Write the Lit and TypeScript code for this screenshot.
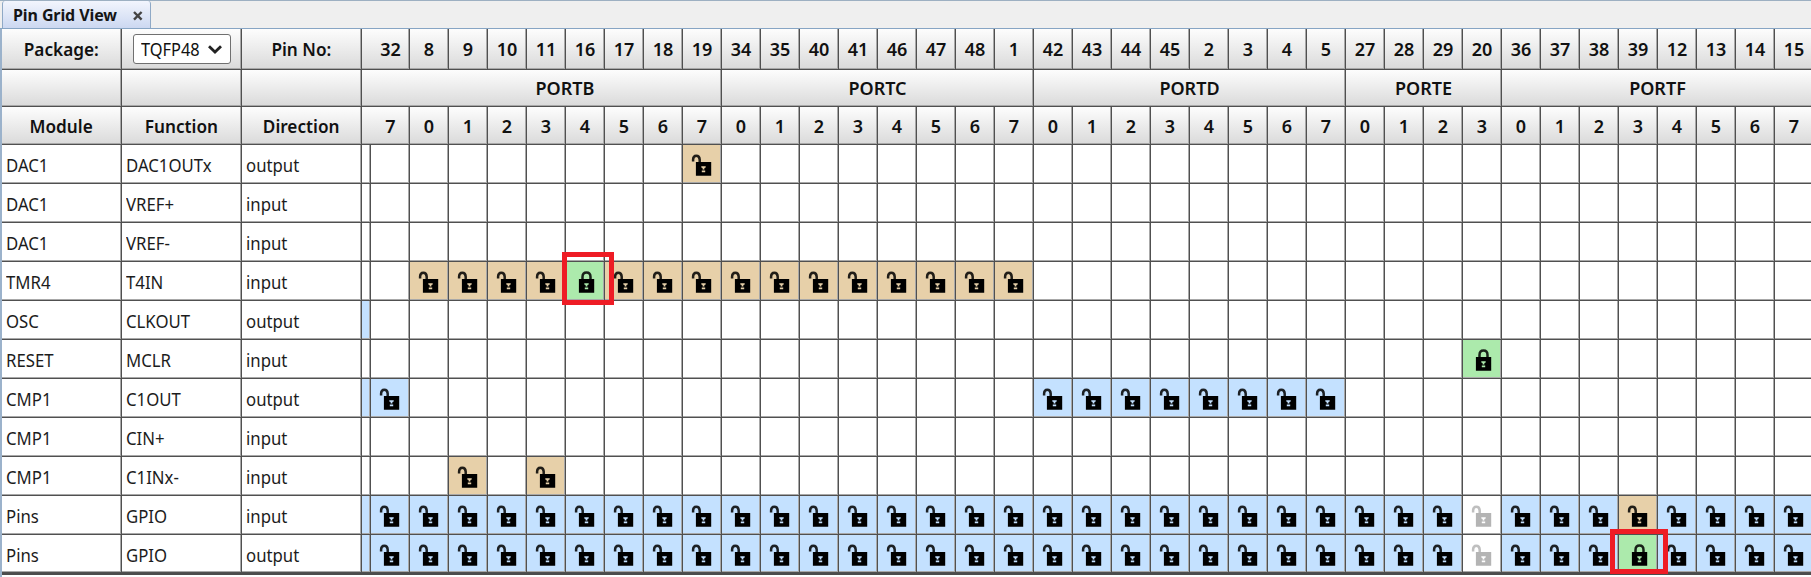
import { LitElement, html, css, svg } from "lit";
import { customElement } from "lit/decorators.js";

const PORTS = [
  { name: "PORTB", pins: [32, 8, 9, 10, 11, 16, 17, 18, 19], bits: [7, 0, 1, 2, 3, 4, 5, 6, 7] },
  { name: "PORTC", pins: [34, 35, 40, 41, 46, 47, 48, 1], bits: [0, 1, 2, 3, 4, 5, 6, 7] },
  { name: "PORTD", pins: [42, 43, 44, 45, 2, 3, 4, 5], bits: [0, 1, 2, 3, 4, 5, 6, 7] },
  { name: "PORTE", pins: [27, 28, 29, 20], bits: [0, 1, 2, 3] },
  { name: "PORTF", pins: [36, 37, 38, 39, 12, 13, 14, 15], bits: [0, 1, 2, 3, 4, 5, 6, 7] },
];
const PINS = PORTS.flatMap((p) => p.pins);
const BITS = PORTS.flatMap((p) => p.bits);

// Cell codes: "." empty, "b" available, "o" shared, "g" locked, "x" disabled
type Row = { module: string; fn: string; dir: string; edge?: boolean; cells: string; mark?: number };
const none = ".".repeat(37);
const put = (base: string, edits: Record<number, string>) =>
  [...base].map((c, i) => edits[i] ?? c).join("");
const all = "b".repeat(37);

const ROWS: Row[] = [
  { module: "DAC1", fn: "DAC1OUTx", dir: "output", cells: put(none, { 8: "o" }) },
  { module: "DAC1", fn: "VREF+", dir: "input", cells: none },
  { module: "DAC1", fn: "VREF-", dir: "input", cells: none },
  { module: "TMR4", fn: "T4IN", dir: "input", cells: ".oooogooooooooooo" + ".".repeat(20), mark: 5 },
  { module: "OSC", fn: "CLKOUT", dir: "output", edge: true, cells: none },
  { module: "RESET", fn: "MCLR", dir: "input", cells: put(none, { 28: "g" }) },
  { module: "CMP1", fn: "C1OUT", dir: "output", edge: true, cells: "b" + ".".repeat(16) + "bbbbbbbb" + ".".repeat(12) },
  { module: "CMP1", fn: "CIN+", dir: "input", cells: none },
  { module: "CMP1", fn: "C1INx-", dir: "input", cells: put(none, { 2: "o", 4: "o" }) },
  { module: "Pins", fn: "GPIO", dir: "input", edge: true, cells: put(all, { 28: "x", 32: "o" }) },
  { module: "Pins", fn: "GPIO", dir: "output", edge: true, cells: put(all, { 28: "x", 32: "g" }), mark: 32 },
];

const lock = (open: boolean) => svg`<svg class="lock" width="21" height="22" viewBox="0 0 21 22">
  <path d=${open ? "M2.1 7.6V5.6Q2.1 1.8 5.3 1.8T8.7 5.6V8.2" : "M8.5 8.5V6Q8.5 1.6 12.5 1.6T16.5 6V8.5"}
    fill="none" stroke="currentColor" stroke-width="2.5" opacity=".86"/>
  <path fill="currentColor" fill-rule="evenodd"
    d="M4.9 8H20.2V21.7H4.9ZM10.3 12.3V13.5L11.6 14.1V15.6H13.4V14.1L14.7 13.5V12.3ZM10.8 16.6V18.2H14.2V16.6Z"/>
</svg>`;

@customElement("app-root")
export class AppRoot extends LitElement {
  static styles = css`
    :host {
      display: block;
      width: 1811px;
      height: 577px;
      overflow: hidden;
      background: #fff;
      color: #1c1c1c;
      font: 18.5px/24px "Noto Sans", sans-serif;
    }
    .tabs {
      box-sizing: border-box;
      height: 29px;
      display: flex;
      background: #efefef;
      border-top: 1px solid #9db0c2;
      border-bottom: 1px solid #87a5c4;
      padding-left: 2px;
    }
    .tab {
      box-sizing: border-box;
      width: 149px;
      display: flex;
      align-items: center;
      border: solid #8fa9c6;
      border-width: 0 1px;
      border-radius: 3px 3px 0 0;
      background: linear-gradient(#f2f5fd, #ccd8f1);
      padding-left: 10px;
      font-size: 16px;
      font-weight: 700;
      letter-spacing: -0.1px;
      color: #151515;
    }
    .tab span { width: 108px; white-space: nowrap; }
    .tab svg { margin: 2px 0 0 12px; }
    .body {
      height: 548px;
      border-left: 2px solid #9bb2cb;
    }
    .grid {
      display: grid;
      grid-template-columns: 120px 120px 120px 9px repeat(37, 39px);
      grid-template-rows: 41px 37px 38px repeat(10, 39px) 38px;
      width: max-content;
      border-bottom: 2px solid #4c4c4c;
    }
    .cell, .head {
      box-sizing: border-box;
      border-right: 1px solid #505050;
      border-bottom: 1px solid #505050;
      box-shadow: inset -1px -1px #a8a8a8;
      display: flex;
      align-items: center;
      justify-content: center;
      min-width: 0;
      position: relative;
      white-space: nowrap;
    }
    .head {
      background: linear-gradient(#fdfdfd, #dadada);
      font-weight: 600;
      font-size: 18px;
      color: #111;
    }
    .label > span { transform: scaleX(.955); }
    .text { justify-content: flex-start; padding: 2px 0 0 4px; }
    .text span { transform: scaleX(.905); transform-origin: 0 50%; }
    .wide { grid-column: span 2; }
    .first { padding-left: 10px; }
    .offset { padding-left: 47px; }
    .b { background: #c4e1ff; }
    .o { background: #e7d0a9; }
    .g { background: #aceaac; }
    .lock { display: block; color: #000; margin: 2px 2px 0 0; }
    .x .lock { color: #b4b4b4; }
    .select {
      box-sizing: border-box;
      width: 98px;
      height: 30px;
      border: 1px solid #707070;
      border-radius: 3px;
      background: #fff;
      display: flex;
      align-items: center;
      padding-left: 7px;
      font-weight: 400;
      font-size: 18px;
    }
    .select span { width: 67px; transform: scaleX(.91); transform-origin: 0 50%; }
    .mark {
      position: absolute;
      z-index: 2;
      border: 5px solid #ee1c25;
      left: -4px;
      top: -10px;
      width: 42px;
      height: 43px;
    }
    .mark.last { left: -9px; top: -6px; width: 48px; height: 35px; }
  `;

  render() {
    return html`
      <div class="tabs">
        <div class="tab"><span>Pin Grid View</span>
          <svg width="10" height="10" viewBox="0 0 10 10"><path d="M1 1L8.6 8.6M8.6 1L1 8.6" stroke="#444" stroke-width="2.4"/></svg>
        </div>
      </div>
      <div class="body"><div class="grid">
        <div class="head label"><span>Package:</span></div>
        <div class="head"><div class="select"><span>TQFP48</span>
          <svg width="14" height="9" viewBox="0 0 14 9"><path d="M1 1.2L7 7L13 1.2" fill="none" stroke="#222" stroke-width="2.8"/></svg>
        </div></div>
        <div class="head label"><span>Pin No:</span></div>
        ${PINS.map((p, i) => html`<div class="head ${i ? "" : "wide first"}"><span>${p}</span></div>`)}
        <div class="head"></div><div class="head"></div><div class="head"></div>
        ${PORTS.map((p, i) => html`<div class="head ${i ? "" : "offset"}" style="grid-column: span ${p.pins.length + (i ? 0 : 1)}">${p.name}</div>`)}
        <div class="head label"><span>Module</span></div>
        <div class="head label"><span>Function</span></div>
        <div class="head label"><span>Direction</span></div>
        ${BITS.map((b, i) => html`<div class="head ${i ? "" : "wide first"}"><span>${b}</span></div>`)}
        ${ROWS.map((r, ri) => html`
          <div class="cell text"><span>${r.module}</span></div>
          <div class="cell text"><span>${r.fn}</span></div>
          <div class="cell text"><span>${r.dir}</span></div>
          <div class="cell ${r.edge ? "b" : ""}"></div>
          ${[...r.cells].map((c, i) => html`<div class="cell ${c === "." ? "" : c}">
            ${c === "." ? "" : lock(c !== "g")}
            ${r.mark === i ? html`<div class="mark ${ri === ROWS.length - 1 ? "last" : ""}"></div>` : ""}
          </div>`)}
        `)}
      </div></div>
    `;
  }
}
